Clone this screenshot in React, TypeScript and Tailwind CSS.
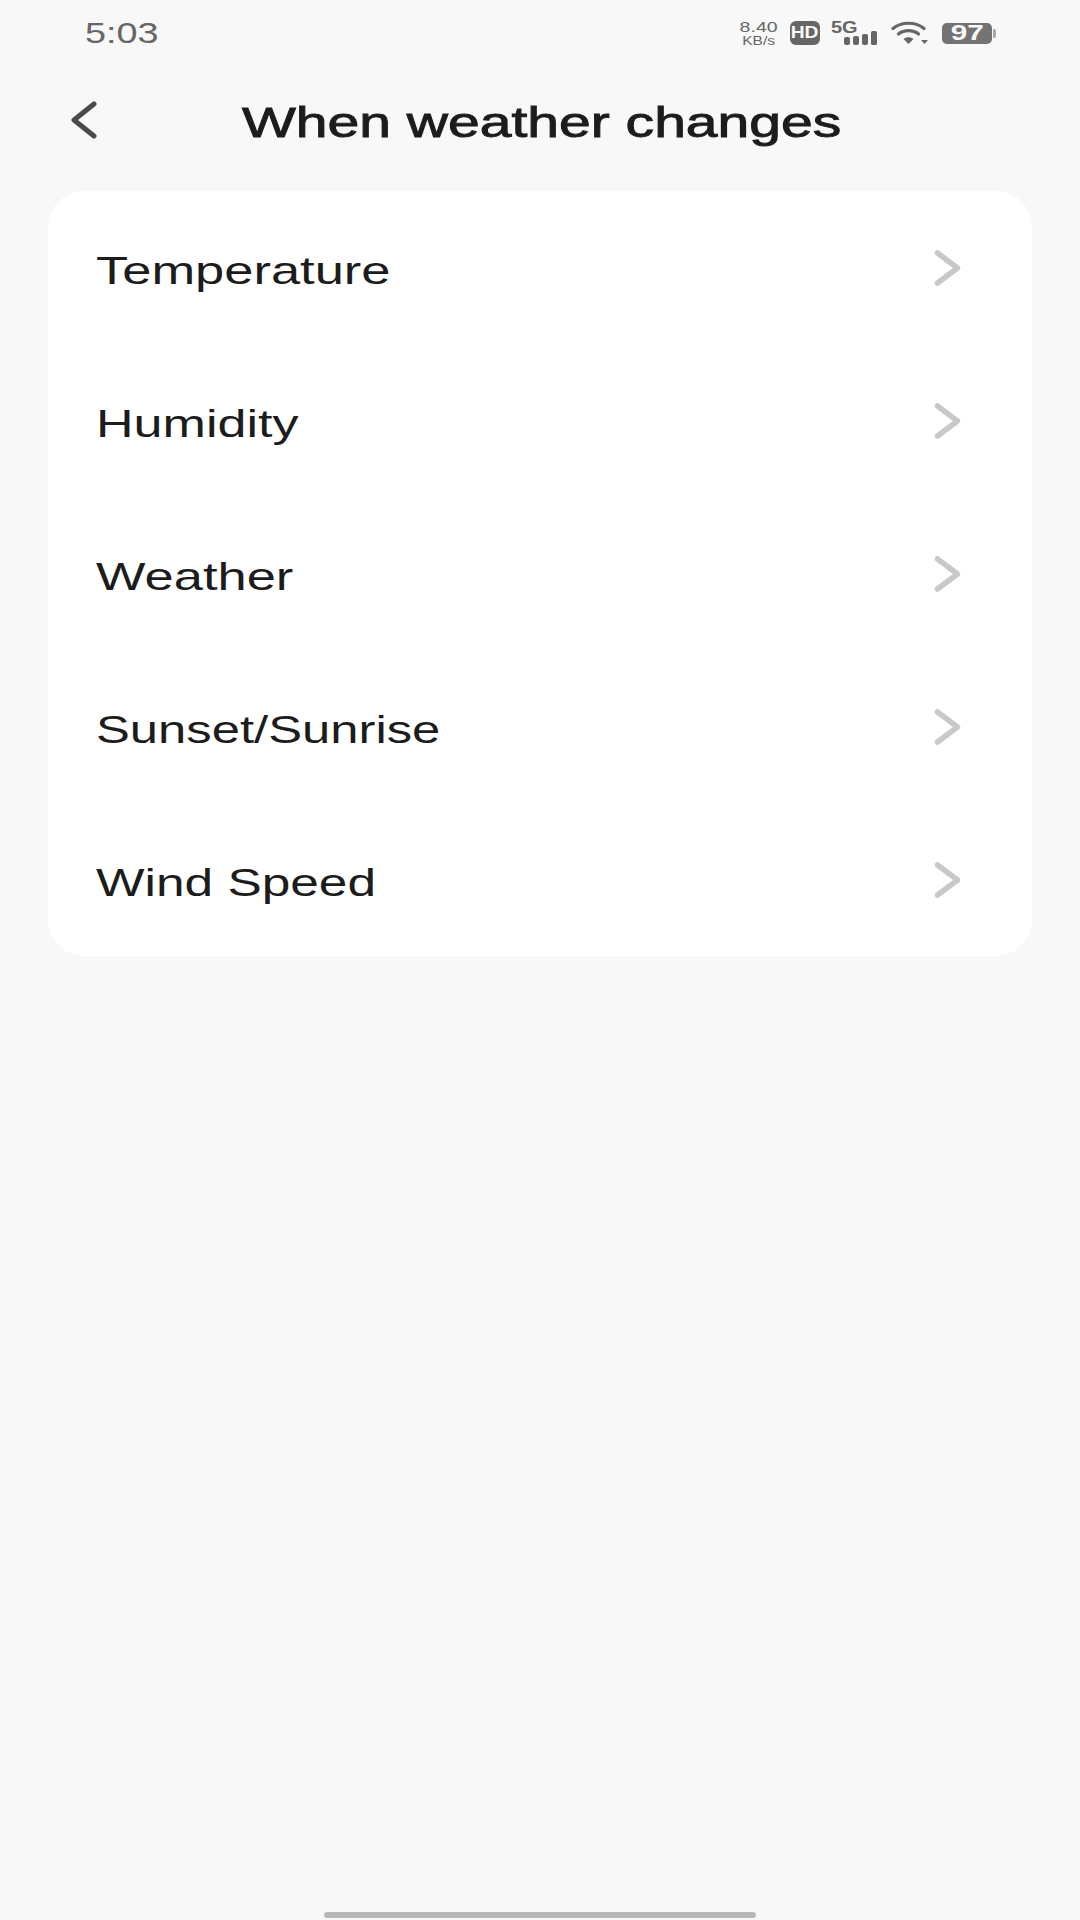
const rows = [
  { label: "Temperature", scale: "scale-x-[1.345]" },
  { label: "Humidity", scale: "scale-x-[1.335]" },
  { label: "Weather", scale: "scale-x-[1.345]" },
  { label: "Sunset/Sunrise", scale: "scale-x-[1.302]" },
  { label: "Wind Speed", scale: "scale-x-[1.318]" },
];

function Chevron() {
  return (
    <svg width="28" height="38" viewBox="0 0 28 38" fill="none" className="shrink-0">
      <path d="M3.5 4 L23.5 19 L3.5 34" stroke="#c8c8c8" strokeWidth="5.5" strokeLinecap="round" strokeLinejoin="round" />
    </svg>
  );
}

function StatusIcons() {
  return (
    <div className="flex items-center">
      <div className="flex w-[40px] flex-col items-center gap-[3px] text-[#666]">
        <span className="block origin-center scale-x-[1.3] text-[15px] leading-[12px]">8.40</span>
        <span className="block origin-center scale-x-[1.3] text-[12px] leading-[10px]">KB/s</span>
      </div>
      <div className="ml-[11px] flex h-[24px] w-[30px] items-center justify-center rounded-[6px] bg-[#666]">
        <span className="origin-center scale-x-[1.2] text-[16px] leading-none font-bold text-[#f8f8f8]">HD</span>
      </div>
      <div className="relative ml-[11px] h-[24px] w-[48px]">
        <span className="absolute top-[-2px] left-0 origin-left scale-x-[1.25] text-[16px] leading-[18px] font-bold text-[#666]">5G</span>
        <svg width="48" height="24" viewBox="0 0 48 24" className="absolute top-0 left-0" fill="#666">
          <rect x="13" y="16" width="6" height="8" rx="2" />
          <rect x="22" y="15" width="6" height="9" rx="2" />
          <rect x="31" y="13" width="6" height="11" rx="2" />
          <rect x="40" y="10" width="6" height="14" rx="1.5" />
        </svg>
      </div>
      <svg width="38" height="24" viewBox="0 0 38 24" className="ml-[12px]" fill="none">
        <path d="M2 7.5 C10 0.5 25 0.5 33 7.5" stroke="#666" strokeWidth="3.2" strokeLinecap="round" />
        <path d="M7.5 13 C13 8.5 22 8.5 27.5 13" stroke="#666" strokeWidth="3.2" strokeLinecap="round" />
        <path d="M12.5 18 L17.5 23 L22.5 18 C19.5 15.5 15.5 15.5 12.5 18 Z" fill="#666" />
        <path d="M30 19 L37 19 L33.5 23 Z" fill="#666" />
      </svg>
      <div className="ml-[13px] flex items-center">
        <div className="flex h-[21px] w-[50px] items-center justify-center rounded-[5px] bg-[#737373]">
          <span className="origin-center scale-x-[1.35] text-[22px] leading-none font-bold text-[#f8f8f8]">97</span>
        </div>
        <div className="ml-[1px] h-[9px] w-[3px] rounded-r-[2px] bg-[#a8a8a8]" />
      </div>
    </div>
  );
}

export default function App() {
  return (
    <div className="flex h-[1920px] w-[1080px] flex-col overflow-hidden bg-[#f8f8f8] font-['Liberation_Sans',sans-serif]">
      <div className="flex h-[66px] items-center justify-between pr-[84px] pl-[85px]">
        <span className="origin-left scale-x-[1.26] text-[30px] leading-none text-[#666]">5:03</span>
        <StatusIcons />
      </div>
      <div className="relative flex h-[125px] items-center justify-center pb-[12px] pl-[3px]">
        <svg width="28" height="38" viewBox="0 0 28 38" fill="none" className="absolute top-[35px] left-[70px]">
          <path d="M24 3 L4 19 L24 35" stroke="#4a4a4a" strokeWidth="5" strokeLinecap="round" strokeLinejoin="round" />
        </svg>
        <span className="origin-center scale-x-[1.358] text-[42px] leading-none font-normal text-[#1c1c1c] [-webkit-text-stroke:0.9px_#1c1c1c]">
          When weather changes
        </span>
      </div>
      <div className="mx-[48px] flex flex-col rounded-[36px] bg-white">
        {rows.map((r) => (
          <div key={r.label} className="flex h-[153px] items-center justify-between pr-[70px] pl-[48px]">
            <span className={`origin-left ${r.scale} pt-[5px] text-[39px] leading-none text-[#1c1c1c]`}>{r.label}</span>
            <Chevron />
          </div>
        ))}
      </div>
      <div className="mt-auto mb-[2px] h-[6px] w-[432px] self-center rounded-full bg-[#b8b8b8]" />
    </div>
  );
}
